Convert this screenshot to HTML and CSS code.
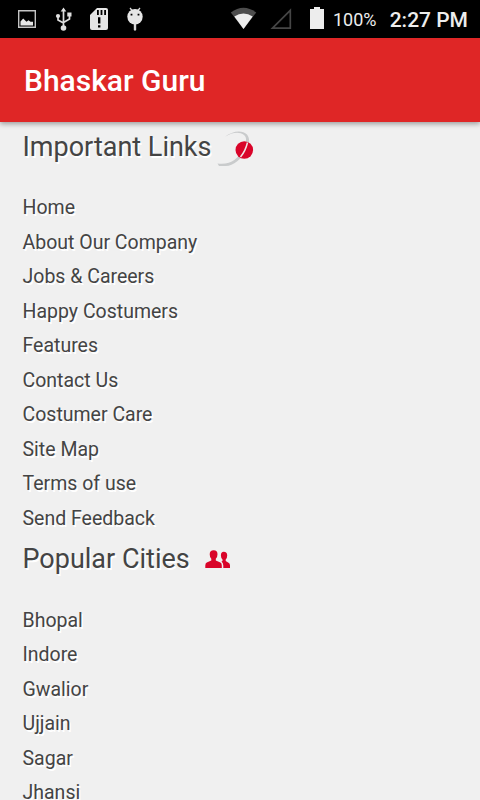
FILE: index.html
```html
<!DOCTYPE html>
<html lang="en">
<head>
    <meta charset="utf-8">
    <title>Bhaskar Guru</title>
    <link rel="stylesheet" href="styles.css">
</head>
<body>
    <div class="status-bar">
        <svg class="status-icons" width="160" height="38" viewBox="0 0 160 38">
            <!-- picture -->
            <path d="M18.7 10.7h16.6v16.6H18.7z" fill="none" stroke="#c4c4c4" stroke-width="1.4"/>
            <path d="M20.5 25.5v-4l2.7-3 3.3 3.2 2-1.5 2 1.5h2.5v3.8z" fill="#e6e6e6"/>
            <!-- usb -->
            <g fill="none" stroke="#dcdcdc" stroke-width="1.7">
                <path d="M63.5 11v16M58 17v3l5.5 3M69.5 15v4l-6 3.5"/>
            </g>
            <g fill="#e0e0e0">
                <path d="M63.5 7.5l2.8 4h-5.6zM67.3 12.5h4.2v4h-4.2z"/>
                <circle cx="58" cy="16" r="2.1"/>
                <circle cx="63.5" cy="28" r="2.8"/>
            </g>
            <!-- sd card -->
            <path d="M97 8h9q2 0 2 2v18q0 2-2 2H92q-2 0-2-2V15z" fill="#e6e6e6"/>
            <path d="M97 10h1.8v5H97zM100.6 10h1.8v5h-1.8zM104.2 10h1.8v5h-1.8zM98 17.3h2.4v6.2H98zM98 25.2h2.4v2.4H98z" fill="#000"/>
            <!-- debug -->
            <path d="M130 8l2.5 3M140 8l-2.5 3" stroke="#dcdcdc" stroke-width="1.3"/>
            <path d="M133.8 22h2.4v8q-1.2 1.6-2.4 0z" fill="#d8d8d8"/>
            <circle cx="135" cy="16.8" r="7.7" fill="#e6e6e6"/>
            <path d="M130.6 13.8h1.8v1.6h-1.8zM137.6 13.8h1.8v1.6h-1.8z" fill="#000"/>
        </svg>
        <svg class="status-icons" width="110" height="38" viewBox="220 0 110 38">
            <!-- wifi -->
            <path d="M230.8 12.6q12.7-9.6 25.4 0L243.5 29z" fill="#4d4d4d"/>
            <path d="M234.3 16.5q9.2-6 18.4 0L243.5 29z" fill="#ededed"/>
            <!-- signal -->
            <path d="M272.5 28.2L290.3 10.4v17.8z" fill="none" stroke="#464646" stroke-width="1.7"/>
            <!-- battery -->
            <path d="M314 7h6v2h4v20h-14V9h4z" fill="#ededed"/>
        </svg>
        <span class="battery-level">100%</span>
        <span class="clock">2:27 PM</span>
    </div>

    <header class="app-bar">
        <h1>Bhaskar Guru</h1>
    </header>

    <main class="content">
        <section>
            <h2>Important Links
                <svg class="globe-icon" width="38" height="36" viewBox="217 130 38 36">
                    <path d="M225 136.8C232 131 242 129.500 247 134.500C250 138 249.700 144 247 149C242 159 233 166 226 166H219L217.500 163.500C231 165 238 159 243 149C246 143 247.500 138 244 135C239 131 231 133 225 136.800z" fill="#c9cbcc"/>
                    <circle cx="244.3" cy="150" r="8.8" fill="#d90429"/>
                    <path d="M247.500 142.500Q245.500 151 240.500 157" fill="none" stroke="#f0e4e6" stroke-width="1.5"/>
                </svg>
            </h2>
            <ul>
                <li>Home</li>
                <li>About Our Company</li>
                <li>Jobs &amp; Careers</li>
                <li>Happy Costumers</li>
                <li>Features</li>
                <li>Contact Us</li>
                <li>Costumer Care</li>
                <li>Site Map</li>
                <li>Terms of use</li>
                <li>Send Feedback</li>
            </ul>
        </section>
        <section>
            <h2>Popular Cities
                <svg class="people-icon" width="26" height="22" viewBox="205 547 26 22">
                    <g fill="#d90429">
                        <path d="M213.700 549.300q3.800 0 3.800 4 0 3-1.700 4.500v1.700l4.600 2q1.400.700 1.400 3v2.500h-16.500v-2.500q0-2.300 1.500-3l4.500-2v-1.700q-1.600-1.500-1.600-4.500 0-4 4-4z"/>
                        <path d="M223.700 550.800q3.500 0 3.500 3.700 0 2.600-1.500 4v1.500l2.800 1.700q1.500.800 1.500 2.800v2.500h-6.700v-2.500q0-2.500-1.800-4l1-.600v-1.400q-1.600-1.500-1.600-4 0-3.700 2.800-3.700z"/>
                    </g>
                </svg>
            </h2>
            <ul>
                <li>Bhopal</li>
                <li>Indore</li>
                <li>Gwalior</li>
                <li>Ujjain</li>
                <li>Sagar</li>
                <li>Jhansi</li>
            </ul>
        </section>
    </main>
</body>
</html>
```
FILE: styles.css
```css
body {
    margin: 0;
    height: 800px;
    overflow: hidden;
    display: flex;
    flex-direction: column;
    background-color: #f0f0f0;
    font-family: Roboto, sans-serif;
    color: #444;
}
.status-bar {
    flex: none;
    display: flex;
    align-items: center;
    height: 38px;
    background-color: #000;
    color: #ededed;
    white-space: nowrap;
}
.status-icons { flex: none; }
.status-icons + .status-icons { margin-left: 60px; }
.battery-level { margin-left: 3px; font-size: 18px; }
.clock { margin-left: auto; padding: 2px 12px 0 0; font-size: 21px; font-weight: 500; }
.app-bar {
    flex: none;
    display: flex;
    align-items: center;
    height: 84px;
    padding-left: 24px;
    background-color: #df2626;
    box-shadow: 0 2px 5px rgba(0,0,0,0.35);
}
.app-bar h1 { margin: 0; font-size: 30px; font-weight: 500; color: #fff; }
.content {
    flex: none;
    padding-left: 22.5px;
    text-shadow: 1.5px 1.5px 0 #fff;
}
.content h2 {
    display: flex;
    align-items: center;
    height: 50px;
    margin: 0 0 19px;
    font-size: 27px;
    font-weight: 400;
}
.content section + section { margin-top: -2px; }
.content section + section h2 { margin-bottom: 19.5px; }
.content ul { margin: 0; padding: 0; list-style: none; }
.content li { height: 34.5px; line-height: 34.5px; font-size: 19.5px; }
.globe-icon { margin: 2px 0 0 5px; }
.people-icon { margin-left: 15px; }
```
